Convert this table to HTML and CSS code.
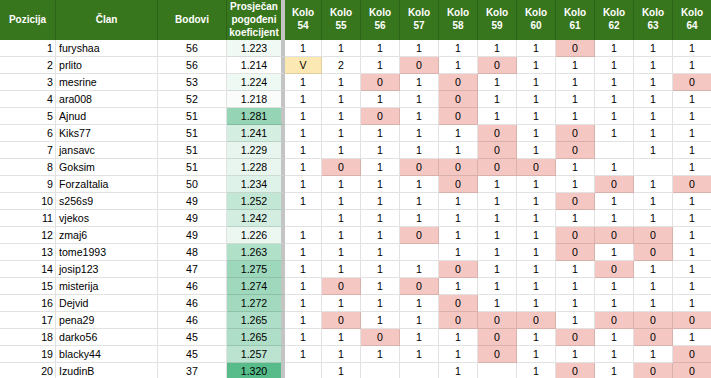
FILE: index.html
```html
<!DOCTYPE html>
<html lang="hr">
<head>
<meta charset="utf-8">
<title>Tablica</title>
<link rel="stylesheet" href="styles.css">
</head>
<body>
<div class="sheet">
  <div class="row head">
    <div class="h">Pozicija</div>
    <div class="h">Član</div>
    <div class="h">Bodovi</div>
    <div class="h hdiv">Prosječan<br>pogođeni<br>koeficijent</div>
    <div class="h">Kolo<br>54</div>
    <div class="h">Kolo<br>55</div>
    <div class="h">Kolo<br>56</div>
    <div class="h">Kolo<br>57</div>
    <div class="h">Kolo<br>58</div>
    <div class="h">Kolo<br>59</div>
    <div class="h">Kolo<br>60</div>
    <div class="h">Kolo<br>61</div>
    <div class="h">Kolo<br>62</div>
    <div class="h">Kolo<br>63</div>
    <div class="h">Kolo<br>64</div>
  </div>

  <div class="row"><div class="c num">1</div><div class="c name">furyshaa</div><div class="c ctr">56</div><div class="c coef" style="background:rgb(241,249,245)">1.223</div>
    <div class="c">1</div><div class="c">1</div><div class="c">1</div><div class="c">1</div><div class="c">1</div><div class="c">1</div><div class="c">1</div><div class="c z">0</div><div class="c">1</div><div class="c">1</div><div class="c">1</div></div>

  <div class="row"><div class="c num">2</div><div class="c name">prlito</div><div class="c ctr">56</div><div class="c coef" style="background:rgb(255,255,255)">1.214</div>
    <div class="c v">V</div><div class="c">2</div><div class="c">1</div><div class="c z">0</div><div class="c">1</div><div class="c z">0</div><div class="c">1</div><div class="c">1</div><div class="c">1</div><div class="c">1</div><div class="c">1</div></div>

  <div class="row"><div class="c num">3</div><div class="c name">mesrine</div><div class="c ctr">53</div><div class="c coef" style="background:rgb(239,249,244)">1.224</div>
    <div class="c">1</div><div class="c">1</div><div class="c z">0</div><div class="c">1</div><div class="c z">0</div><div class="c">1</div><div class="c">1</div><div class="c">1</div><div class="c">1</div><div class="c">1</div><div class="c z">0</div></div>

  <div class="row"><div class="c num">4</div><div class="c name">ara008</div><div class="c ctr">52</div><div class="c coef" style="background:rgb(249,252,251)">1.218</div>
    <div class="c">1</div><div class="c">1</div><div class="c">1</div><div class="c">1</div><div class="c z">0</div><div class="c">1</div><div class="c">1</div><div class="c">1</div><div class="c">1</div><div class="c">1</div><div class="c">1</div></div>

  <div class="row"><div class="c num">5</div><div class="c name">Ajnud</div><div class="c ctr">51</div><div class="c coef" style="background:rgb(149,212,181)">1.281</div>
    <div class="c">1</div><div class="c">1</div><div class="c z">0</div><div class="c">1</div><div class="c z">0</div><div class="c">1</div><div class="c">1</div><div class="c">1</div><div class="c">1</div><div class="c">1</div><div class="c">1</div></div>

  <div class="row"><div class="c num">6</div><div class="c name">Kiks77</div><div class="c ctr">51</div><div class="c coef" style="background:rgb(212,238,225)">1.241</div>
    <div class="c">1</div><div class="c">1</div><div class="c">1</div><div class="c">1</div><div class="c">1</div><div class="c z">0</div><div class="c">1</div><div class="c z">0</div><div class="c">1</div><div class="c">1</div><div class="c">1</div></div>

  <div class="row"><div class="c num">7</div><div class="c name">jansavc</div><div class="c ctr">51</div><div class="c coef" style="background:rgb(231,245,238)">1.229</div>
    <div class="c">1</div><div class="c">1</div><div class="c">1</div><div class="c">1</div><div class="c">1</div><div class="c z">0</div><div class="c">1</div><div class="c z">0</div><div class="c"></div><div class="c">1</div><div class="c">1</div></div>

  <div class="row"><div class="c num">8</div><div class="c name">Goksim</div><div class="c ctr">51</div><div class="c coef" style="background:rgb(233,246,240)">1.228</div>
    <div class="c">1</div><div class="c z">0</div><div class="c">1</div><div class="c z">0</div><div class="c z">0</div><div class="c z">0</div><div class="c z">0</div><div class="c">1</div><div class="c">1</div><div class="c"></div><div class="c">1</div></div>

  <div class="row"><div class="c num">9</div><div class="c name">ForzaItalia</div><div class="c ctr">50</div><div class="c coef" style="background:rgb(223,242,233)">1.234</div>
    <div class="c">1</div><div class="c">1</div><div class="c">1</div><div class="c">1</div><div class="c z">0</div><div class="c">1</div><div class="c">1</div><div class="c">1</div><div class="c z">0</div><div class="c">1</div><div class="c z">0</div></div>

  <div class="row"><div class="c num">10</div><div class="c name">s256s9</div><div class="c ctr">49</div><div class="c coef" style="background:rgb(195,231,213)">1.252</div>
    <div class="c">1</div><div class="c">1</div><div class="c">1</div><div class="c">1</div><div class="c">1</div><div class="c">1</div><div class="c">1</div><div class="c z">0</div><div class="c">1</div><div class="c">1</div><div class="c">1</div></div>

  <div class="row"><div class="c num">11</div><div class="c name">vjekos</div><div class="c ctr">49</div><div class="c coef" style="background:rgb(211,237,224)">1.242</div>
    <div class="c"></div><div class="c">1</div><div class="c">1</div><div class="c">1</div><div class="c">1</div><div class="c">1</div><div class="c">1</div><div class="c">1</div><div class="c">1</div><div class="c">1</div><div class="c">1</div></div>

  <div class="row"><div class="c num">12</div><div class="c name">zmaj6</div><div class="c ctr">49</div><div class="c coef" style="background:rgb(236,247,242)">1.226</div>
    <div class="c">1</div><div class="c">1</div><div class="c">1</div><div class="c z">0</div><div class="c">1</div><div class="c">1</div><div class="c">1</div><div class="c z">0</div><div class="c z">0</div><div class="c z">0</div><div class="c">1</div></div>

  <div class="row"><div class="c num">13</div><div class="c name">tome1993</div><div class="c ctr">48</div><div class="c coef" style="background:rgb(177,224,201)">1.263</div>
    <div class="c">1</div><div class="c">1</div><div class="c">1</div><div class="c"></div><div class="c">1</div><div class="c">1</div><div class="c">1</div><div class="c z">0</div><div class="c">1</div><div class="c z">0</div><div class="c">1</div></div>

  <div class="row"><div class="c num">14</div><div class="c name">josip123</div><div class="c ctr">47</div><div class="c coef" style="background:rgb(158,216,188)">1.275</div>
    <div class="c">1</div><div class="c">1</div><div class="c">1</div><div class="c">1</div><div class="c z">0</div><div class="c">1</div><div class="c">1</div><div class="c">1</div><div class="c z">0</div><div class="c">1</div><div class="c">1</div></div>

  <div class="row"><div class="c num">15</div><div class="c name">misterija</div><div class="c ctr">46</div><div class="c coef" style="background:rgb(160,216,189)">1.274</div>
    <div class="c">1</div><div class="c z">0</div><div class="c">1</div><div class="c z">0</div><div class="c">1</div><div class="c">1</div><div class="c">1</div><div class="c">1</div><div class="c">1</div><div class="c">1</div><div class="c">1</div></div>

  <div class="row"><div class="c num">16</div><div class="c name">Dejvid</div><div class="c ctr">46</div><div class="c coef" style="background:rgb(163,218,191)">1.272</div>
    <div class="c">1</div><div class="c">1</div><div class="c">1</div><div class="c">1</div><div class="c z">0</div><div class="c">1</div><div class="c">1</div><div class="c">1</div><div class="c">1</div><div class="c">1</div><div class="c">1</div></div>

  <div class="row"><div class="c num">17</div><div class="c name">pena29</div><div class="c ctr">46</div><div class="c coef" style="background:rgb(174,222,199)">1.265</div>
    <div class="c">1</div><div class="c z">0</div><div class="c">1</div><div class="c">1</div><div class="c z">0</div><div class="c z">0</div><div class="c z">0</div><div class="c">1</div><div class="c z">0</div><div class="c z">0</div><div class="c z">0</div></div>

  <div class="row"><div class="c num">18</div><div class="c name">darko56</div><div class="c ctr">45</div><div class="c coef" style="background:rgb(174,222,199)">1.265</div>
    <div class="c">1</div><div class="c">1</div><div class="c z">0</div><div class="c">1</div><div class="c">1</div><div class="c z">0</div><div class="c">1</div><div class="c z">0</div><div class="c">1</div><div class="c z">0</div><div class="c">1</div></div>

  <div class="row"><div class="c num">19</div><div class="c name">blacky44</div><div class="c ctr">45</div><div class="c coef" style="background:rgb(187,227,208)">1.257</div>
    <div class="c">1</div><div class="c">1</div><div class="c">1</div><div class="c">1</div><div class="c">1</div><div class="c z">0</div><div class="c">1</div><div class="c">1</div><div class="c">1</div><div class="c">1</div><div class="c z">0</div></div>

  <div class="row"><div class="c num">20</div><div class="c name">IzudinB</div><div class="c ctr">37</div><div class="c coef" style="background:rgb(87,187,138)">1.320</div>
    <div class="c"></div><div class="c">1</div><div class="c"></div><div class="c"></div><div class="c">1</div><div class="c"></div><div class="c">1</div><div class="c z">0</div><div class="c">1</div><div class="c z">0</div><div class="c z">0</div></div>
</div>
</body>
</html>
```

FILE: styles.css
```css
html, body {
  margin: 0;
  padding: 0;
  background: #ffffff;
  overflow: hidden;
}

.sheet {
  width: 712px;
  font-family: "Liberation Sans", Arial, sans-serif;
  color: #000000;
}

.row {
  display: grid;
  grid-template-columns: 56px 102px 69px 58px 37px repeat(10, 39px);
}

.h {
  box-sizing: border-box;
  height: 40px;
  padding-bottom: 2px;
  background: #38761d;
  color: #ffffff;
  font-weight: bold;
  font-size: 10px;
  line-height: 13px;
  display: flex;
  align-items: center;
  justify-content: center;
  text-align: center;
  border-right: 1px solid #2e6418;
  white-space: nowrap;
}

.h.hdiv {
  border-right: 4px solid #c4c4c4;
}

.c {
  box-sizing: border-box;
  height: 17px;
  line-height: 16px;
  font-size: 10.6px;
  text-align: center;
  white-space: nowrap;
  overflow: hidden;
  border-right: 1px solid rgba(0, 0, 0, 0.115);
  border-bottom: 1px solid rgba(0, 0, 0, 0.115);
}

.c.num {
  text-align: right;
  padding-right: 2px;
}

.c.name {
  text-align: left;
  padding-left: 3px;
}

.c.coef {
  border-right: 4px solid #c4c4c4;
}

.c.z {
  background: #f4c7c3;
}

.c.v {
  background: #fce8b2;
}
```
